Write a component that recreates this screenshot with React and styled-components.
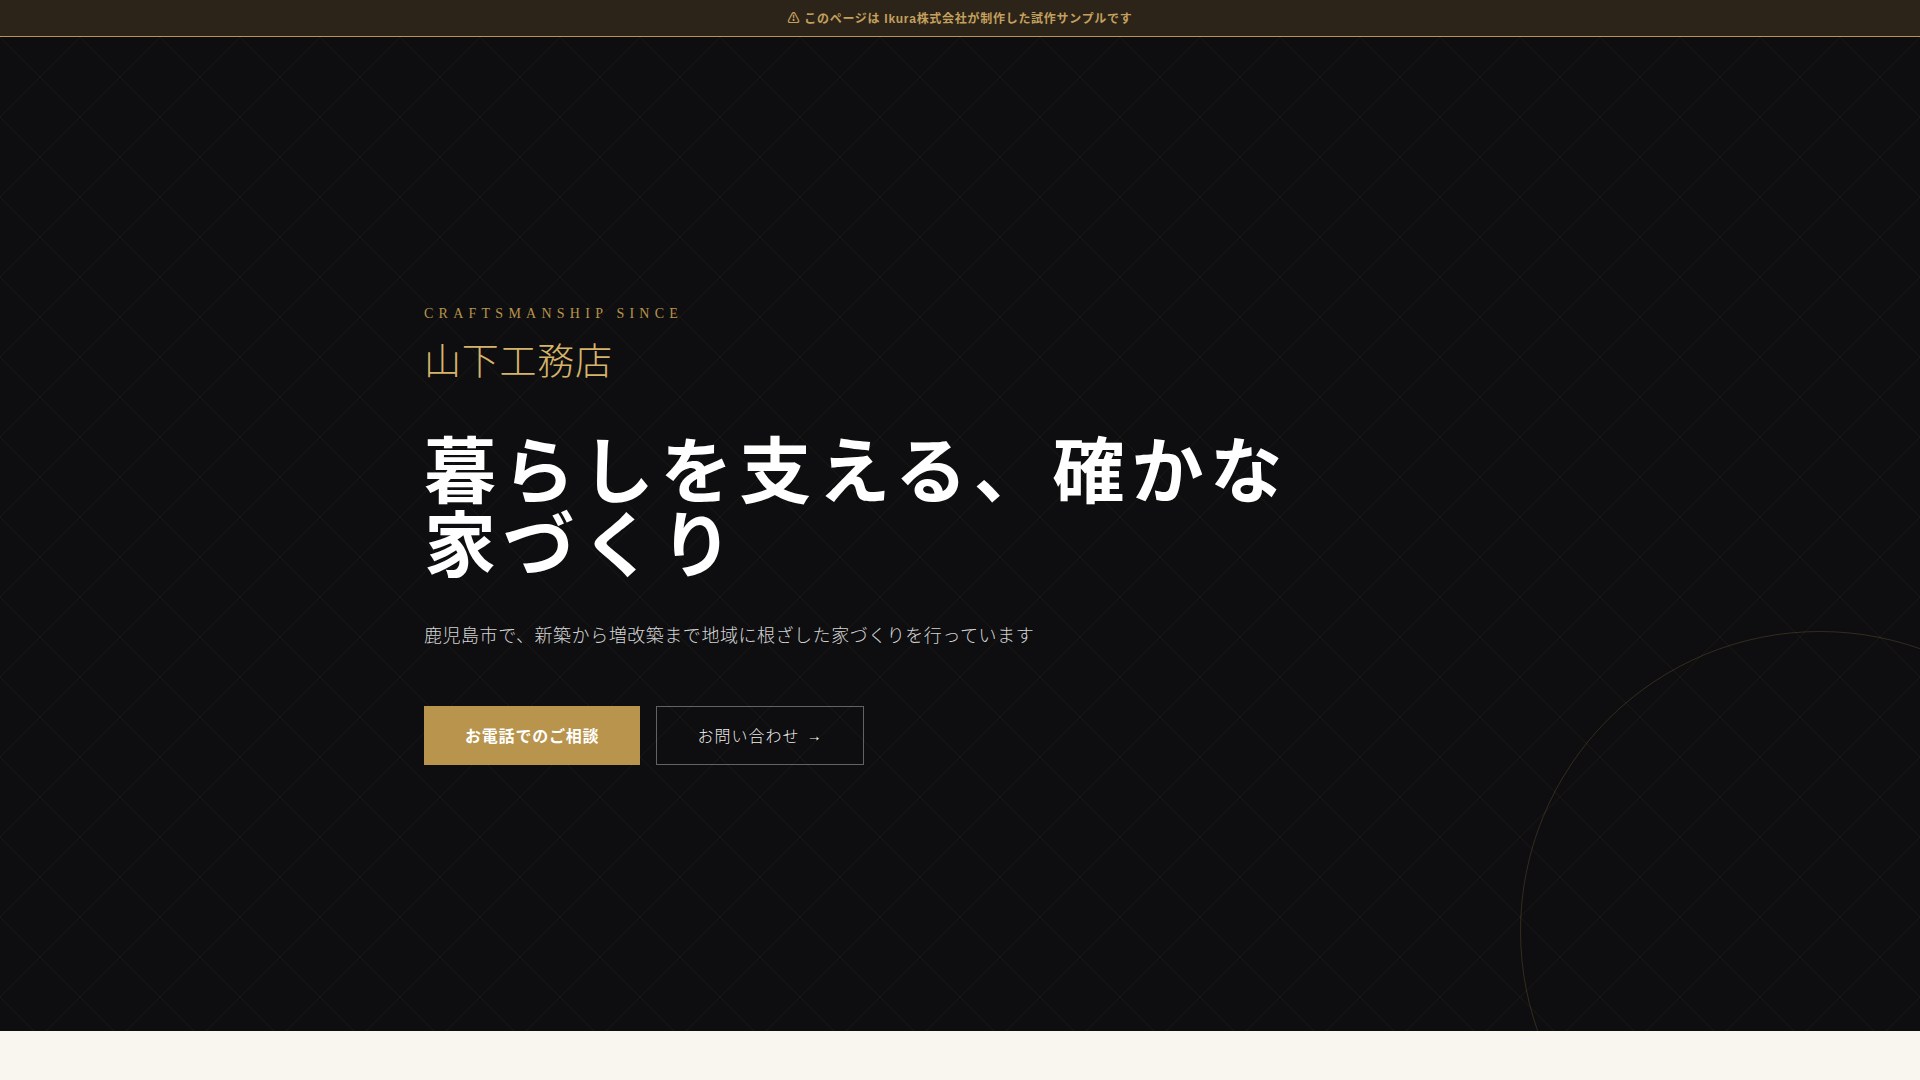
import React from "react";
import styled, { createGlobalStyle } from "styled-components";

const GlobalStyle = createGlobalStyle`
  html, body { margin: 0; padding: 0; }
  body {
    background: #f9f6ef;
    font-family: "Noto Sans CJK JP", "Noto Sans", sans-serif;
    -webkit-font-smoothing: antialiased;
  }
  * { box-sizing: border-box; }
`;

const Notice = styled.div`
  height: 37px;
  background: #2c2419;
  border-bottom: 1px solid #b8944c;
  display: flex;
  align-items: center;
  justify-content: center;
  padding-bottom: 2px;
  color: #c4a05e;
  font-size: 12px;
  font-weight: 700;
  font-family: "Liberation Sans", "Noto Sans CJK JP", sans-serif;
  letter-spacing: 0.06em;
`;

const Hero = styled.section`
  position: relative;
  overflow: hidden;
  height: 994px;
  padding-top: 4px;
  background: #0e0e10;
  display: flex;
  align-items: center;
`;

const Pattern = styled.svg`
  position: absolute;
  inset: 0;
  width: 100%;
  height: 100%;
  pointer-events: none;
`;

const Ring = styled.div`
  position: absolute;
  width: 600px;
  height: 600px;
  right: -200px;
  bottom: -200px;
  border-radius: 50%;
  border: 1px solid rgba(184, 148, 76, 0.22);
  pointer-events: none;
`;

const Content = styled.div`
  position: relative;
  width: 1072px;
  margin: 0 auto;
  display: flex;
  flex-direction: column;
  align-items: flex-start;
`;

const Eyebrow = styled.p`
  margin: 0;
  font-family: "Liberation Serif", "DejaVu Serif", serif;
  font-size: 14px;
  line-height: 1;
  letter-spacing: 0.375em;
  color: #b8944c;
`;

const Brand = styled.p`
  margin: 16px 0 0;
  font-size: 37px;
  line-height: 1.2;
  font-weight: 300;
  letter-spacing: 0.02em;
  color: #d6b469;
`;

const Title = styled.h1`
  margin: 47px 0 0;
  max-width: 900px;
  font-size: 72px;
  line-height: 74px;
  font-weight: 700;
  letter-spacing: 0.095em;
  color: #ffffff;
`;

const Lead = styled.p`
  margin: 43px 0 0;
  font-size: 18px;
  line-height: 1.6;
  font-weight: 300;
  letter-spacing: 0.03em;
  color: rgba(255, 255, 255, 0.84);
`;

const Actions = styled.div`
  margin-top: 57px;
  display: flex;
  gap: 16px;
`;

const Button = styled.a`
  display: inline-flex;
  align-items: center;
  justify-content: center;
  height: 59px;
  padding: 0 40px;
  font-size: 16px;
  letter-spacing: ${(p) => (p.$primary ? "0.05em" : "0.065em")};
  text-decoration: none;
  cursor: pointer;
  font-weight: ${(p) => (p.$primary ? 700 : 300)};
  color: ${(p) => (p.$primary ? "#ffffff" : "rgba(255,255,255,0.94)")};
  background: ${(p) => (p.$primary ? "#b8944d" : "transparent")};
  border: 1px solid ${(p) => (p.$primary ? "#b8944d" : "rgba(255,255,255,0.35)")};
`;

const Arrow = styled.span`
  font-family: "Liberation Sans", sans-serif;
  font-size: 15px;
  margin-left: 7px;
`;

const Below = styled.section`
  height: 300px;
  background: #f9f6ef;
`;

export default function App() {
  return (
    <>
      <GlobalStyle />
      <Notice>⚠ このページは Ikura株式会社が制作した試作サンプルです</Notice>
      <Hero>
        <Pattern aria-hidden="true">
          <defs>
            <pattern id="diamond" width="80" height="80" patternUnits="userSpaceOnUse">
              <path d="M0 0 L80 80 M80 0 L0 80" stroke="rgba(184,148,76,0.07)" strokeWidth="1" fill="none" />
            </pattern>
          </defs>
          <rect width="100%" height="100%" fill="url(#diamond)" />
        </Pattern>
        <Ring />
        <Content>
          <Eyebrow>CRAFTSMANSHIP SINCE</Eyebrow>
          <Brand>山下工務店</Brand>
          <Title>暮らしを支える、確かな家づくり</Title>
          <Lead>鹿児島市で、新築から増改築まで地域に根ざした家づくりを行っています</Lead>
          <Actions>
            <Button $primary href="#">お電話でのご相談</Button>
            <Button href="#">お問い合わせ<Arrow>→</Arrow></Button>
          </Actions>
        </Content>
      </Hero>
      <Below />
    </>
  );
}
